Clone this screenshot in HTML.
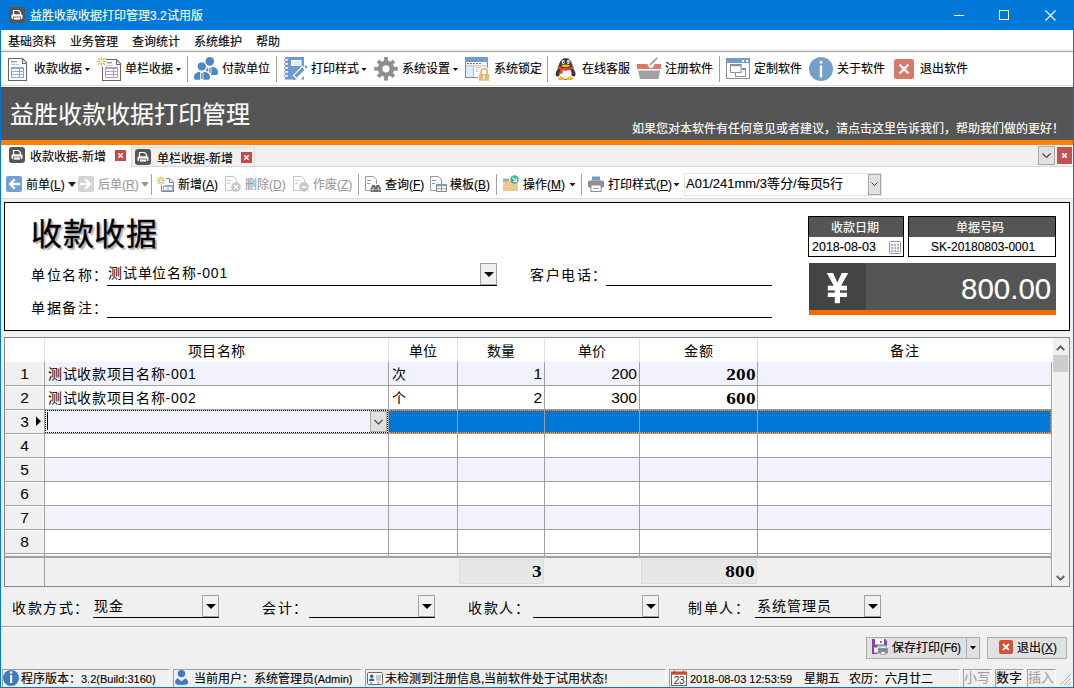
<!DOCTYPE html>
<html lang="zh-CN">
<head>
<meta charset="utf-8">
<style>
*{box-sizing:border-box;margin:0;padding:0}
html,body{width:1074px;height:688px;overflow:hidden;background:#f0f0f0;font-family:"Liberation Sans",sans-serif;font-size:12px;color:#000}
.a{position:absolute}
.t{position:absolute;white-space:nowrap;line-height:1;-webkit-text-stroke:0.12px currentColor}
#title{left:0;top:0;width:1074px;height:30px;background:#0078d7}
#menu{left:1px;top:30px;width:1072px;height:19px;background:#fff}
#tb{left:1px;top:52px;width:1072px;height:33px;background:#fff}
#banner{left:1px;top:87px;width:1072px;height:53px;background:#555}
.sep{position:absolute;width:1px;background:#a0a0a0}
.dd{position:absolute;width:0;height:0;border-left:3px solid transparent;border-right:3px solid transparent;border-top:3px solid #000}
.cb{position:absolute;width:17px;height:22px;background:#f0f0f0;border:1px solid #a0a0a0}
.cb:after{content:"";position:absolute;left:3px;top:8px;border-left:5px solid transparent;border-right:5px solid transparent;border-top:5px solid #000}
.ul{position:absolute;height:1px;background:#000}
.gl{position:absolute;background:#a0a0a0}
.num{font-family:"Liberation Sans",sans-serif;font-size:15.5px;-webkit-text-stroke:0}
.bn{font-family:"Liberation Serif",serif;font-weight:bold;font-size:17px;letter-spacing:0.3px;-webkit-text-stroke:0;transform:scaleX(1.13);transform-origin:right center}
</style>
</head>
<body>
<!-- window borders -->
<div class="a" style="left:0;top:0;width:1px;height:688px;background:#0078d7"></div>
<div class="a" style="left:1073px;top:0;width:1px;height:688px;background:#0078d7"></div>
<div class="a" style="left:0;top:687px;width:1074px;height:1px;background:#0078d7"></div>

<!-- title bar -->
<div id="title" class="a">
  <div class="t" style="left:30px;top:10px;font-size:12px;color:#fff">益胜收款收据打印管理3.2试用版</div>
  <div class="a" style="left:954px;top:15px;width:10px;height:1px;background:#fff"></div>
  <div class="a" style="left:999px;top:10px;width:10px;height:10px;border:1px solid #fff"></div>
  <svg class="a" style="left:1045px;top:10px" width="11" height="11"><path d="M0.5 0.5L10.5 10.5M10.5 0.5L0.5 10.5" stroke="#fff" stroke-width="1.1"/></svg>
</div>

<!-- menu -->
<div id="menu" class="a">
  <div class="t" style="left:7px;top:6px">基础资料</div>
  <div class="t" style="left:69px;top:6px">业务管理</div>
  <div class="t" style="left:131px;top:6px">查询统计</div>
  <div class="t" style="left:193px;top:6px">系统维护</div>
  <div class="t" style="left:255px;top:6px">帮助</div>
</div>
<div class="a" style="left:1px;top:49px;width:1072px;height:2px;background:#f0f0f0"></div>
<div class="a" style="left:1px;top:51px;width:1072px;height:1px;background:#a0a0a0"></div>

<!-- toolbar -->
<div id="tb" class="a"></div>
<svg class="a" style="left:0;top:0" width="1074" height="100">
 <!-- title icon printer -->
 <g transform="translate(9,7)">
  <rect x="0" y="0" width="16" height="16" rx="3" fill="#555"/>
  <path d="M4.5 3.5h5l2 2v2.5h-7z" fill="none" stroke="#fff" stroke-width="1.2"/>
  <rect x="2.5" y="7.5" width="11" height="4.5" rx="1" fill="#fff"/>
  <rect x="4.5" y="10" width="7" height="3" fill="#fff" stroke="#555" stroke-width="0.8"/>
 </g>
 <!-- icon1 doc blue table -->
 <g>
  <path d="M8.5 58.5H22.5L26.5 62.5V80.5H8.5Z" fill="#fff" stroke="#666" stroke-width="1.1"/>
  <path d="M22.5 58.5V63.5H26.5" fill="none" stroke="#666" stroke-width="1.1"/>
  <rect x="11" y="61" width="6" height="1.4" fill="#999"/>
  <rect x="11" y="64" width="8" height="0.8" fill="#bbb"/>
  <rect x="11" y="67" width="13" height="11" fill="#87a9d9"/>
  <rect x="12" y="69" width="7" height="2" fill="#fff"/><rect x="20" y="69" width="3" height="2" fill="#fff"/>
  <rect x="12" y="72" width="7" height="2" fill="#fff"/><rect x="20" y="72" width="3" height="2" fill="#fff"/>
  <rect x="12" y="75" width="7" height="2" fill="#fff"/><rect x="20" y="75" width="3" height="2" fill="#fff"/>
 </g>
 <!-- icon2 doc purple table + sun -->
 <g>
  <path d="M102.5 59.5H116.5L120.5 63.5V80.5H102.5Z" fill="#fff" stroke="#666" stroke-width="1.1"/>
  <path d="M116.5 59.5V64.5H120.5" fill="none" stroke="#666" stroke-width="1.1"/>
  <rect x="107" y="62" width="5" height="1.4" fill="#999"/>
  <rect x="106" y="65" width="7" height="0.8" fill="#bbb"/>
  <rect x="105" y="67" width="13" height="11" fill="#b99bcb"/>
  <rect x="106" y="69" width="7" height="2" fill="#fff"/><rect x="114" y="69" width="3" height="2" fill="#fff"/>
  <rect x="106" y="72" width="7" height="2" fill="#fff"/><rect x="114" y="72" width="3" height="2" fill="#fff"/>
  <rect x="106" y="75" width="7" height="2" fill="#fff"/><rect x="114" y="75" width="3" height="2" fill="#fff"/>
  <rect x="96" y="56" width="10" height="11" fill="#fff"/>
  <path d="M101.5 56.5V66.5M96.5 61.5H106.5M98 58L105 65M105 58L98 65" stroke="#eab466" stroke-width="1.2"/>
  <circle cx="101.5" cy="61.5" r="1.5" fill="#fff"/>
 </g>
 <rect x="187" y="56" width="1" height="26" fill="#a0a0a0"/>
 <!-- icon3 people -->
 <g fill="#4a88cc">
  <circle cx="209.8" cy="61.4" r="4.3"/>
  <path d="M206 75V70Q206 67 212 67Q218 67 218 72.5V73Q218 75 216 75Z"/>
  <rect x="208.2" y="67" width="3.2" height="7" fill="#fff"/>
  <rect x="209" y="68" width="1.8" height="5" fill="#999"/>
  <circle cx="201.8" cy="66.4" r="5.3" fill="#fff"/>
  <path d="M192.8 81V76Q192.8 70.5 202 70.5Q211.2 70.5 211.2 76V81Z" fill="#fff"/>
  <circle cx="201.8" cy="66.4" r="4.2"/>
  <path d="M194 79.8V76.5Q194 71.7 202 71.7Q210 71.7 210 76.5V77.8Q210 79.8 208 79.8H196Q194 79.8 194 77.8Z"/>
  <rect x="200.2" y="71.5" width="3.2" height="8.5" fill="#fff"/>
  <rect x="201" y="73" width="1.8" height="6" fill="#999"/>
 </g>
 <rect x="276" y="56" width="1" height="26" fill="#a0a0a0"/>
 <!-- icon4 notebook -->
 <g>
  <path d="M285 57H304V69L293.5 79.5H285Z" fill="#6b9bd1"/>
  <path d="M300.5 79.5H304V76Z" fill="#6b9bd1"/>
  <rect x="291" y="60" width="10.5" height="6" fill="#fff"/>
  <rect x="292" y="61" width="8.5" height="4" fill="#e4edf8"/>
  <g fill="#f0ece6"><rect x="284" y="59" width="4" height="1.8"/><rect x="284" y="63" width="4" height="1.8"/><rect x="284" y="67" width="4" height="1.8"/><rect x="284" y="71" width="4" height="1.8"/><rect x="284" y="75" width="4" height="1.8"/></g>
  <g fill="#999"><rect x="284" y="59" width="1" height="1.8"/><rect x="284" y="63" width="1" height="1.8"/><rect x="284" y="67" width="1" height="1.8"/><rect x="284" y="71" width="1" height="1.8"/><rect x="284" y="75" width="1" height="1.8"/></g>
  <path d="M294.5 77.5L304.5 67.5" stroke="#fff" stroke-width="5.5"/>
  <path d="M295.5 76.5L303.5 68.5" stroke="#6b9bd1" stroke-width="3.2"/>
  <path d="M305 66L307 68" stroke="#6b9bd1" stroke-width="1.8"/>
  <path d="M292.8 80.2L293.8 76.6L296.4 79.2Z" fill="#6b9bd1"/>
 </g>
 <!-- icon5 gear -->
 <g transform="translate(386,68.8)" fill="#8f8f8f">
  <circle r="8.2"/>
  <rect x="-1.9" y="-11.8" width="3.8" height="23.6"/>
  <rect x="-11.8" y="-1.9" width="23.6" height="3.8"/>
  <rect x="-1.9" y="-11.2" width="3.8" height="22.4" transform="rotate(45)"/>
  <rect x="-1.9" y="-11.2" width="3.8" height="22.4" transform="rotate(-45)"/>
  <circle r="3.6" fill="#fff"/>
 </g>
 <!-- icon6 lock window -->
 <g>
  <rect x="465.5" y="57.5" width="22" height="20" fill="#fff" stroke="#8a8a8a"/>
  <rect x="465" y="57" width="23" height="5" fill="#6d9ecf"/>
  <rect x="466" y="66" width="7" height="11" fill="#dcefff"/>
  <rect x="466" y="65.5" width="21" height="0.8" fill="#aaa"/>
  <rect x="473" y="66" width="0.8" height="11" fill="#aaa"/>
  <g fill="#777"><rect x="467" y="63" width="2" height="1.2"/><rect x="470" y="63" width="2" height="1.2"/><rect x="473" y="63" width="2" height="1.2"/><rect x="476" y="63" width="2" height="1.2"/><rect x="479" y="63" width="2" height="1.2"/></g>
  <g fill="#bbb"><rect x="476" y="67" width="5" height="0.8"/><rect x="476" y="69" width="3" height="0.8"/><rect x="476" y="71" width="3" height="0.8"/></g>
  <rect x="478" y="68" width="12" height="14" fill="#fff"/>
  <path d="M481.2 74V71.2Q481.2 68.6 484.2 68.6Q487.2 68.6 487.2 71.2V74" fill="none" stroke="#e8b870" stroke-width="1.8"/>
  <rect x="479" y="74" width="10" height="6.7" fill="#e8b870"/>
  <rect x="483" y="75.3" width="1.6" height="4" fill="#fff"/>
 </g>
 <rect x="547" y="56" width="1" height="26" fill="#a0a0a0"/>
 <!-- icon7 penguin -->
 <g>
  <ellipse cx="558.2" cy="72.5" rx="2.2" ry="4.2" fill="#3b3b3b" transform="rotate(18 558.2 72.5)"/>
  <ellipse cx="573" cy="72.5" rx="2.2" ry="4.2" fill="#3b3b3b" transform="rotate(-18 573 72.5)"/>
  <ellipse cx="565.6" cy="69" rx="7.4" ry="11" fill="#3b3b3b"/>
  <ellipse cx="565.6" cy="73.5" rx="6" ry="5.8" fill="#f2f4f8"/>
  <ellipse cx="563.2" cy="62" rx="1.5" ry="2" fill="#fff"/><ellipse cx="568.2" cy="62" rx="1.5" ry="2" fill="#fff"/>
  <circle cx="563.5" cy="62.3" r="0.7" fill="#333"/><circle cx="567.9" cy="62.3" r="0.7" fill="#333"/>
  <ellipse cx="565.6" cy="65.8" rx="4.2" ry="1.3" fill="#f2b822"/>
  <path d="M557.8 67Q565.6 71.8 573.4 67" fill="none" stroke="#e2432f" stroke-width="2.6"/>
  <rect x="560" y="69" width="2.6" height="4.6" fill="#e2432f"/>
  <ellipse cx="561.3" cy="78.6" rx="3.4" ry="1.5" fill="#f5b81c"/><ellipse cx="569.9" cy="78.6" rx="3.4" ry="1.5" fill="#f5b81c"/>
 </g>
 <!-- icon8 basket -->
 <g>
  <path d="M637 64H647.5Q648.5 68 651 68Q653.5 68 654.5 64H661V69H637Z" fill="#dc7868"/>
  <path d="M638 70.5H660L658.5 79H640Z" fill="#a0a0a0"/>
  <path d="M649.8 65L657.2 58" stroke="#909090" stroke-width="1.6"/>
 </g>
 <rect x="719" y="56" width="1" height="26" fill="#a0a0a0"/>
 <!-- icon9 window -->
 <g>
  <rect x="726.5" y="58.5" width="23" height="20" fill="#fff" stroke="#909090"/>
  <rect x="726" y="58" width="24" height="5" fill="#6d9ecf"/>
  <rect x="742" y="60" width="2" height="2" fill="#fff"/><rect x="746" y="60" width="2" height="2" fill="#fff"/>
  <path d="M735.5 72V76.5H745.5V68.5H741.5" fill="none" stroke="#909090"/>
  <rect x="742" y="68" width="4" height="2" fill="#909090"/>
  <rect x="730.5" y="64.5" width="10.5" height="8" fill="#fff" stroke="#909090"/>
  <rect x="730" y="64" width="11.5" height="2.2" fill="#909090"/>
 </g>
 <!-- icon10 info -->
 <g>
  <circle cx="821" cy="69" r="12" fill="#739fcb"/>
  <circle cx="821" cy="62.2" r="1.5" fill="#fff"/>
  <rect x="819.8" y="65.5" width="2.4" height="12" fill="#fff"/>
 </g>
 <!-- icon11 exit -->
 <g>
  <rect x="894" y="59" width="20" height="20" rx="2.5" fill="#d9776a"/>
  <path d="M899.5 64.5L908.5 73.5M908.5 64.5L899.5 73.5" stroke="#fff" stroke-width="2.4"/>
 </g>
 <!-- dropdown arrows -->
 <g fill="#000">
  <path d="M85 68H90L87.5 71Z"/><path d="M176 68H181L178.5 71Z"/><path d="M361.5 68H366.5L364 71Z"/><path d="M453 68H458L455.5 71Z"/>
 </g>
</svg>
<div class="t" style="left:34px;top:63px">收款收据</div>
<div class="t" style="left:125px;top:63px">单栏收据</div>
<div class="t" style="left:222px;top:63px">付款单位</div>
<div class="t" style="left:311px;top:63px">打印样式</div>
<div class="t" style="left:402px;top:63px">系统设置</div>
<div class="t" style="left:494px;top:63px">系统锁定</div>
<div class="t" style="left:582px;top:63px">在线客服</div>
<div class="t" style="left:665px;top:63px">注册软件</div>
<div class="t" style="left:754px;top:63px">定制软件</div>
<div class="t" style="left:837px;top:63px">关于软件</div>
<div class="t" style="left:920px;top:63px">退出软件</div>
<div class="a" style="left:1px;top:85px;width:1072px;height:1px;background:#d8d8d8"></div>
<div class="a" style="left:1px;top:86px;width:1072px;height:1px;background:#fff"></div>

<!-- banner -->
<div id="banner" class="a">
  <div class="a" style="left:0;top:0;width:1072px;height:1px;background:#484848"></div>
  <div class="t" style="left:9px;top:16px;font-size:24px;color:#fff">益胜收款收据打印管理</div>
  <div class="t" style="left:631px;top:36px;font-size:12px;color:#fff">如果您对本软件有任何意见或者建议，请点击这里告诉我们，帮助我们做的更好！</div>
</div>
<div class="a" style="left:1px;top:140px;width:1072px;height:5px;background:#ff8000"></div>

<!-- tab strip -->
<div class="a" style="left:1px;top:145px;width:1072px;height:22px;background:#f0f0f0"></div>
<div class="a" style="left:1px;top:166px;width:1072px;height:1px;background:#d9d9d9"></div>
<div class="a" style="left:1px;top:145px;width:130px;height:23px;background:#fff"></div>
<div class="a" style="left:131px;top:147px;width:124px;height:20px;background:#f0f0f0;border:1px solid #d9d9d9;border-bottom:none"></div>

<!-- secondary toolbar -->
<div class="a" style="left:1px;top:167px;width:1072px;height:31px;background:#fff"></div>
<div class="a" style="left:131px;top:166px;width:942px;height:1px;background:#d9d9d9"></div>
<div class="a" style="left:1px;top:198px;width:1072px;height:1px;background:#d9d9d9"></div>
<svg class="a" style="left:0;top:140px" width="1074" height="60">
 <g transform="translate(0,-140)">
 <!-- tab printer icons -->
 <g transform="translate(9,147)">
  <rect x="0" y="0" width="16" height="16" rx="3" fill="#555"/>
  <path d="M4.5 3.5h5l2 2v2.5h-7z" fill="none" stroke="#fff" stroke-width="1.2"/>
  <rect x="2.5" y="7.5" width="11" height="4.5" rx="1" fill="#fff"/>
  <rect x="4.5" y="10" width="7" height="3" fill="#fff" stroke="#555" stroke-width="0.8"/>
 </g>
 <g transform="translate(135,149)">
  <rect x="0" y="0" width="16" height="16" rx="3" fill="#555"/>
  <path d="M4.5 3.5h5l2 2v2.5h-7z" fill="none" stroke="#fff" stroke-width="1.2"/>
  <rect x="2.5" y="7.5" width="11" height="4.5" rx="1" fill="#fff"/>
  <rect x="4.5" y="10" width="7" height="3" fill="#fff" stroke="#555" stroke-width="0.8"/>
 </g>
 <rect x="115" y="150" width="11" height="11" fill="#c9474a"/>
 <path d="M118.3 153.3L122.7 157.7M122.7 153.3L118.3 157.7" stroke="#fff" stroke-width="1.6"/>
 <rect x="241" y="152" width="11" height="11" fill="#c9474a"/>
 <path d="M244.3 155.3L248.7 159.7M248.7 155.3L244.3 159.7" stroke="#fff" stroke-width="1.6"/>
 <!-- right tab buttons -->
 <rect x="1038.5" y="146.5" width="16" height="18" fill="#e1e1e1" stroke="#a8a8a8"/>
 <path d="M1042.5 153.5L1046.5 157.5L1050.5 153.5" fill="none" stroke="#444" stroke-width="1.1"/>
 <rect x="1057" y="147" width="15" height="17" fill="#c65050"/>
 <path d="M1062.3 153.3L1066.7 157.7M1066.7 153.3L1062.3 157.7" stroke="#fff" stroke-width="1.8"/>
 <!-- prev -->
 <rect x="6" y="176" width="16" height="16" rx="2" fill="#729fd4"/>
 <path d="M20 184H10.5M14.8 179.2L10 184L14.8 188.8" fill="none" stroke="#fff" stroke-width="2.3"/>
 <path d="M68 182H76L72 187Z" fill="#222"/>
 <!-- next -->
 <rect x="78" y="176" width="16" height="16" rx="2" fill="#d4d4d4"/>
 <path d="M80 184H89.5M85.2 179.2L90 184L85.2 188.8" fill="none" stroke="#fff" stroke-width="2.3"/>
 <path d="M141 182H149L145 187Z" fill="#999"/>
 <rect x="151" y="174" width="1" height="21" fill="#a0a0a0"/>
 <!-- new -->
 <path d="M161.5 178.5H170L173.5 182V191.5H161.5Z" fill="#fff" stroke="#888"/>
 <path d="M169.5 178.5V182.5H173.5" fill="none" stroke="#888"/>
 <rect x="163.5" y="185.5" width="9" height="5" fill="#fff" stroke="#8aa9d6"/>
 <rect x="163.5" y="185.5" width="9" height="1.5" fill="#8aa9d6"/>
 <rect x="167.5" y="187" width="1" height="3.5" fill="#8aa9d6"/>
 <rect x="156" y="176" width="10" height="9.5" fill="#fff"/>
 <path d="M161 176.2V185.2M156.5 180.7H165.5M157.8 177.5L164.2 183.9M164.2 177.5L157.8 183.9" stroke="#eab466" stroke-width="1.1"/>
 <circle cx="161" cy="180.7" r="1.3" fill="#fff"/>
 <!-- delete grey -->
 <path d="M225.5 176.5H233.5L236.5 179.5V190.5H225.5Z" fill="#fff" stroke="#c4c4c4"/>
 <rect x="227" y="180" width="4" height="1" fill="#ccc"/><rect x="227" y="183" width="3" height="1" fill="#ccc"/>
 <circle cx="236" cy="187" r="4.8" fill="#c8c8c8"/>
 <path d="M234 185L238 189M238 185L234 189" stroke="#fff" stroke-width="1.2"/>
 <!-- void grey -->
 <path d="M293.5 176.5H301.5L304.5 179.5V190.5H293.5Z" fill="#fff" stroke="#c4c4c4"/>
 <rect x="295" y="180" width="4" height="1" fill="#ccc"/><rect x="295" y="183" width="3" height="1" fill="#ccc"/>
 <circle cx="304" cy="187" r="4.8" fill="#c8c8c8"/>
 <rect x="301.5" y="186.3" width="5" height="1.6" fill="#fff"/>
 <rect x="358" y="174" width="1" height="21" fill="#a0a0a0"/>
 <!-- query -->
 <path d="M365.5 176.5H373.5L376.5 179.5V190.5H365.5Z" fill="#fff" stroke="#999"/>
 <rect x="367" y="180" width="4" height="1" fill="#999"/><rect x="367" y="183" width="3" height="1" fill="#6d9ecf"/>
 <rect x="370" y="184" width="11" height="8" fill="#fff"/>
 <path d="M370.5 192V188.5L372.3 185H375L376.2 188.5V192ZM375.2 192V188.5L376.5 185H379.2L381 188.5V192Z" fill="#6a6a6a"/><path d="M373 187V191.5M378.5 187V191.5M370.5 189.3H381" stroke="#e8e8e8" stroke-width="0.6"/>
 <!-- template -->
 <path d="M430.5 176.5H438.5L441.5 179.5V190.5H430.5Z" fill="#fff" stroke="#999"/>
 <rect x="432" y="180" width="4" height="1" fill="#999"/><rect x="432" y="183" width="3" height="1" fill="#6d9ecf"/>
 <rect x="436.5" y="184.5" width="10" height="7" fill="#fff" stroke="#888"/>
 <rect x="436" y="184" width="11" height="2.2" fill="#6d9ecf"/>
 <path d="M441.5 186V191.5M436.5 188.8H446.5" stroke="#888" stroke-width="0.8"/>
 <rect x="496" y="174" width="1" height="21" fill="#a0a0a0"/>
 <!-- operate folder -->
 <rect x="503" y="181" width="15" height="10" fill="#f0c98a"/>
 <rect x="503" y="178.5" width="6" height="3" fill="#aaa"/>
 <circle cx="514.5" cy="179.5" r="4.3" fill="#3db79b"/>
 <path d="M512.5 177.5L516.2 181.2M516.5 178.5V181.5H513.5" fill="none" stroke="#fff" stroke-width="1.1"/>
 <path d="M569.5 183H575.5L572.5 186.5Z" fill="#222"/>
 <rect x="581" y="174" width="1" height="21" fill="#a0a0a0"/>
 <!-- printer -->
 <rect x="592" y="176.5" width="8" height="4" fill="#6d9ecf"/>
 <rect x="588" y="180.5" width="16" height="7" rx="1.5" fill="#8e8e8e"/>
 <rect x="591" y="185" width="10" height="6.5" fill="#fff" stroke="#8e8e8e"/>
 <rect x="593" y="188" width="6" height="0.8" fill="#6d9ecf"/>
 <path d="M673.5 183H679.5L676.5 186.5Z" fill="#222"/>
 <!-- combo -->
 <rect x="684.5" y="173.5" width="197" height="22" fill="#fff" stroke="#e3e3e3"/>
 <rect x="868.5" y="174.5" width="12" height="20" fill="#e1e1e1" stroke="#a8a8a8"/>
 <path d="M871.5 182.5L874.5 185.5L877.5 182.5" fill="none" stroke="#444" stroke-width="1"/>
 </g>
</svg>
<div class="t" style="left:30px;top:151px">收款收据-新增</div>
<div class="t" style="left:157px;top:153px">单栏收据-新增</div>
<div class="t" style="left:26px;top:179px">前单(<u>L</u>)</div>
<div class="t" style="left:98px;top:179px;color:#999">后单(<u>R</u>)</div>
<div class="t" style="left:178px;top:179px">新增(<u>A</u>)</div>
<div class="t" style="left:245px;top:179px;color:#999">删除(<u>D</u>)</div>
<div class="t" style="left:313px;top:179px;color:#999">作废(<u>Z</u>)</div>
<div class="t" style="left:385px;top:179px">查询(<u>F</u>)</div>
<div class="t" style="left:450px;top:179px">模板(<u>B</u>)</div>
<div class="t" style="left:523px;top:179px">操作(<u>M</u>)</div>
<div class="t" style="left:608px;top:179px">打印样式(<u>P</u>)</div>
<div class="t" style="left:686px;top:177px;font-size:13px">A01/241mm/3等分/每页5行</div>

<!-- form panel -->
<div class="a" style="left:4px;top:202px;width:1066px;height:129px;background:#fff;border:1px solid #000"></div>
<div class="t" style="left:31px;top:219px;font-size:31px;font-weight:normal;-webkit-text-stroke:0.35px #000;text-shadow:2px 2px 1.5px rgba(0,0,0,0.35);letter-spacing:0.5px">收款收据</div>
<div class="t" style="left:31px;top:268px;font-size:14px;letter-spacing:1.5px;-webkit-text-stroke:0">单位名称：</div>
<div class="t" style="left:108px;top:266px;font-size:14px;letter-spacing:0.8px;-webkit-text-stroke:0">测试单位名称-001</div>
<div class="ul" style="left:107px;top:285px;width:390px"></div>
<div class="cb" style="left:480px;top:263px;height:22px"></div>
<div class="t" style="left:530px;top:268px;font-size:14px;letter-spacing:1.5px;-webkit-text-stroke:0">客户电话：</div>
<div class="ul" style="left:606px;top:285px;width:166px"></div>
<div class="t" style="left:31px;top:301px;font-size:14px;letter-spacing:1.5px;-webkit-text-stroke:0">单据备注：</div>
<div class="ul" style="left:107px;top:317px;width:665px"></div>
<!-- date box -->
<div class="a" style="left:808px;top:216px;width:96px;height:41px;border:1px solid #000;background:#fff"></div>
<div class="a" style="left:809px;top:217px;width:94px;height:20px;background:#555"></div>
<div class="t" style="left:831px;top:222px;color:#fff">收款日期</div>
<div class="t" style="left:812px;top:241px;font-size:12.5px">2018-08-03</div>
<svg class="a" style="left:888px;top:240px" width="14" height="15">
 <rect x="1.5" y="1.5" width="11" height="12" rx="1" fill="#f4f6f9" stroke="#999"/>
 <g fill="#a8b4c8"><rect x="3" y="4" width="2" height="2"/><rect x="6" y="4" width="2" height="2"/><rect x="9" y="4" width="2" height="2"/><rect x="3" y="7" width="2" height="2"/><rect x="6" y="7" width="2" height="2"/><rect x="9" y="7" width="2" height="2"/><rect x="3" y="10" width="2" height="2"/><rect x="6" y="10" width="2" height="2"/><rect x="9" y="10" width="2" height="2"/></g>
</svg>
<div class="a" style="left:908px;top:216px;width:148px;height:41px;border:1px solid #000;background:#fff"></div>
<div class="a" style="left:909px;top:217px;width:146px;height:20px;background:#555"></div>
<div class="t" style="left:956px;top:222px;color:#fff">单据号码</div>
<div class="t" style="left:931px;top:241px;font-size:12px">SK-20180803-0001</div>
<!-- money box -->
<div class="a" style="left:809px;top:263px;width:247px;height:52px;background:#555"></div>
<div class="a" style="left:809px;top:263px;width:57px;height:47px;background:#444"></div>
<div class="a" style="left:809px;top:310px;width:247px;height:5px;background:#ff6600"></div>
<svg class="a" style="left:0;top:0" width="1074" height="320"><g fill="#fff"><path d="M826.7 273H833.1L837.3 282.5L841.8 273H848.2L840.6 286.5H834.2Z"/><rect x="827.8" y="285.7" width="19.2" height="4.7"/><rect x="827.8" y="292.7" width="19.2" height="4.3"/><rect x="834.8" y="285" width="5.2" height="18.2"/></g></svg>
<div class="t" style="left:961px;top:274px;font-size:29.5px;color:#fff">800.00</div>

<!-- grid -->
<div class="a" style="left:4px;top:337px;width:1066px;height:250px;background:#fff;border:1px solid #828790"></div>
<div class="a" style="left:5px;top:362px;width:39px;height:224px;background:#f0f0f0"></div>
<div class="a" style="left:5px;top:386px;width:38px;height:1px;background:#fff"></div>
<div class="a" style="left:5px;top:410px;width:38px;height:1px;background:#fff"></div>
<div class="a" style="left:5px;top:434px;width:38px;height:1px;background:#fff"></div>
<div class="a" style="left:5px;top:458px;width:38px;height:1px;background:#fff"></div>
<div class="a" style="left:5px;top:482px;width:38px;height:1px;background:#fff"></div>
<div class="a" style="left:5px;top:506px;width:38px;height:1px;background:#fff"></div>
<div class="a" style="left:5px;top:530px;width:38px;height:1px;background:#fff"></div>
<div class="a" style="left:5px;top:554px;width:38px;height:1px;background:#fff"></div>
<div class="a" style="left:43px;top:362px;width:1px;height:194px;background:#f8f8f8"></div>
<div class="a" style="left:45px;top:362px;width:1006px;height:23px;background:#f2f2fd"></div>
<div class="a" style="left:45px;top:458px;width:1006px;height:23px;background:#f2f2fd"></div>
<div class="a" style="left:45px;top:506px;width:1006px;height:23px;background:#f2f2fd"></div>
<div class="a" style="left:45px;top:554px;width:1006px;height:2px;background:#f2f2fd"></div>
<div class="a" style="left:45px;top:410px;width:343px;height:23px;background:#f2f2fd"></div>
<div class="a" style="left:389px;top:410px;width:662px;height:23px;background:#0078d7"></div>
<div class="a" style="left:5px;top:558px;width:1047px;height:28px;background:#f0f0f0"></div>
<div class="gl" style="left:44px;top:338px;width:1px;height:24px;background:#e3e3e3"></div>
<div class="gl" style="left:388px;top:338px;width:1px;height:24px;background:#e3e3e3"></div>
<div class="gl" style="left:457px;top:338px;width:1px;height:24px;background:#e3e3e3"></div>
<div class="gl" style="left:544px;top:338px;width:1px;height:24px;background:#e3e3e3"></div>
<div class="gl" style="left:639px;top:338px;width:1px;height:24px;background:#e3e3e3"></div>
<div class="gl" style="left:757px;top:338px;width:1px;height:24px;background:#e3e3e3"></div>
<div class="gl" style="left:5px;top:385px;width:1047px;height:1px"></div>
<div class="gl" style="left:5px;top:409px;width:1047px;height:1px"></div>
<div class="gl" style="left:5px;top:433px;width:1047px;height:1px"></div>
<div class="gl" style="left:5px;top:457px;width:1047px;height:1px"></div>
<div class="gl" style="left:5px;top:481px;width:1047px;height:1px"></div>
<div class="gl" style="left:5px;top:505px;width:1047px;height:1px"></div>
<div class="gl" style="left:5px;top:529px;width:1047px;height:1px"></div>
<div class="gl" style="left:5px;top:553px;width:1047px;height:1px"></div>
<div class="gl" style="left:5px;top:556px;width:1047px;height:2px"></div>
<div class="gl" style="left:44px;top:362px;width:1px;height:194px"></div>
<div class="gl" style="left:388px;top:362px;width:1px;height:194px"></div>
<div class="gl" style="left:457px;top:362px;width:1px;height:194px"></div>
<div class="gl" style="left:544px;top:362px;width:1px;height:194px"></div>
<div class="gl" style="left:639px;top:362px;width:1px;height:194px"></div>
<div class="gl" style="left:757px;top:362px;width:1px;height:194px"></div>
<div class="gl" style="left:1051px;top:362px;width:1px;height:194px"></div>
<div class="gl" style="left:44px;top:558px;width:1px;height:28px"></div>
<div class="gl" style="left:1051px;top:558px;width:1px;height:28px"></div>
<div class="a" style="left:459px;top:559px;width:85px;height:25px;background:#e6e8e8;border:1px solid #dcdcdc"></div>
<div class="a" style="left:641px;top:559px;width:116px;height:25px;background:#e6e8e8;border:1px solid #dcdcdc"></div>
<div class="a" style="left:1053px;top:338px;width:16px;height:248px;background:#f0f0f0"></div>
<div class="a" style="left:1053px;top:355px;width:15px;height:17px;background:#cdcdcd"></div>
<svg class="a" style="left:1053px;top:338px" width="16" height="248"><path d="M3.8 12L7.5 8.3L11.2 12" fill="none" stroke="#606060" stroke-width="1.8"/><path d="M3.8 238L7.5 241.7L11.2 238" fill="none" stroke="#606060" stroke-width="1.8"/></svg>
<div class="t" style="left:45px;top:344px;width:343px;text-align:center;font-size:14px;letter-spacing:0.5px;-webkit-text-stroke:0">项目名称</div>
<div class="t" style="left:389px;top:344px;width:68px;text-align:center;font-size:14px;letter-spacing:0.5px;-webkit-text-stroke:0">单位</div>
<div class="t" style="left:458px;top:344px;width:86px;text-align:center;font-size:14px;letter-spacing:0.5px;-webkit-text-stroke:0">数量</div>
<div class="t" style="left:545px;top:344px;width:94px;text-align:center;font-size:14px;letter-spacing:0.5px;-webkit-text-stroke:0">单价</div>
<div class="t" style="left:640px;top:344px;width:117px;text-align:center;font-size:14px;letter-spacing:0.5px;-webkit-text-stroke:0">金额</div>
<div class="t" style="left:758px;top:344px;width:293px;text-align:center;font-size:14px;letter-spacing:0.5px;-webkit-text-stroke:0">备注</div>
<div class="t num" style="left:5px;top:366px;width:39px;text-align:center">1</div>
<div class="t num" style="left:5px;top:390px;width:39px;text-align:center">2</div>
<div class="t num" style="left:5px;top:414px;width:39px;text-align:center">3</div>
<div class="t num" style="left:5px;top:438px;width:39px;text-align:center">4</div>
<div class="t num" style="left:5px;top:462px;width:39px;text-align:center">5</div>
<div class="t num" style="left:5px;top:486px;width:39px;text-align:center">6</div>
<div class="t num" style="left:5px;top:510px;width:39px;text-align:center">7</div>
<div class="t num" style="left:5px;top:534px;width:39px;text-align:center">8</div>
<svg class="a" style="left:35px;top:416px" width="8" height="11"><path d="M1 0.5L6 5.2L1 10Z" fill="#000"/></svg>
<div class="a" style="left:45px;top:410px;width:343px;height:23px;border:1px dotted #000"></div>
<div class="a" style="left:47px;top:412px;width:1px;height:18px;background:#000"></div>
<div class="a" style="left:370px;top:411px;width:17px;height:21px;background:#e1e1e1;border:1px solid #adadad"></div>
<svg class="a" style="left:370px;top:411px" width="17" height="21"><path d="M4.5 9L8.5 13L12.5 9" fill="none" stroke="#444" stroke-width="1.1"/></svg>
<div class="a" style="left:389px;top:410px;width:662px;height:23px;border-top:1px dotted #e89a50;border-bottom:1px dotted #e89a50;border-right:1px dotted #e89a50"></div>
<div class="t" style="left:48px;top:367px;font-size:14px;letter-spacing:0.7px;-webkit-text-stroke:0">测试收款项目名称-001</div>
<div class="t" style="left:48px;top:391px;font-size:14px;letter-spacing:0.7px;-webkit-text-stroke:0">测试收款项目名称-002</div>
<div class="t" style="left:392px;top:367px;font-size:14px;-webkit-text-stroke:0">次</div>
<div class="t" style="left:392px;top:391px;font-size:14px;-webkit-text-stroke:0">个</div>
<div class="t num" style="left:458px;top:366px;width:84px;text-align:right">1</div>
<div class="t num" style="left:545px;top:366px;width:92px;text-align:right">200</div>
<div class="t bn" style="left:640px;top:366px;width:116px;text-align:right">200</div>
<div class="t num" style="left:458px;top:390px;width:84px;text-align:right">2</div>
<div class="t num" style="left:545px;top:390px;width:92px;text-align:right">300</div>
<div class="t bn" style="left:640px;top:390px;width:116px;text-align:right">600</div>
<div class="t bn" style="left:459px;top:563px;width:83px;text-align:right">3</div>
<div class="t bn" style="left:641px;top:563px;width:114px;text-align:right">800</div>

<!-- bottom -->
<div class="t" style="left:12px;top:601px;font-size:14px;letter-spacing:1.5px;-webkit-text-stroke:0">收款方式：</div>
<div class="ul" style="left:93px;top:617px;width:126px"></div>
<div class="cb" style="left:202px;top:595px;height:22px;width:17px"></div>
<div class="t" style="left:94px;top:599px;font-size:14px;letter-spacing:1px;-webkit-text-stroke:0">现金</div>
<div class="t" style="left:262px;top:601px;font-size:14px;letter-spacing:1.5px;-webkit-text-stroke:0">会计：</div>
<div class="ul" style="left:309px;top:617px;width:126px"></div>
<div class="cb" style="left:418px;top:595px;height:22px;width:17px"></div>
<div class="t" style="left:468px;top:601px;font-size:14px;letter-spacing:1.5px;-webkit-text-stroke:0">收款人：</div>
<div class="ul" style="left:533px;top:617px;width:126px"></div>
<div class="cb" style="left:642px;top:595px;height:22px;width:17px"></div>
<div class="t" style="left:688px;top:601px;font-size:14px;letter-spacing:1.5px;-webkit-text-stroke:0">制单人：</div>
<div class="ul" style="left:755px;top:617px;width:126px"></div>
<div class="cb" style="left:864px;top:595px;height:22px;width:17px"></div>
<div class="t" style="left:757px;top:599px;font-size:14px;letter-spacing:1px;-webkit-text-stroke:0">系统管理员</div>
<div class="a" style="left:1px;top:626px;width:1072px;height:1px;background:#a0a0a0"></div>
<div class="a" style="left:1px;top:627px;width:1072px;height:1px;background:#fff"></div>
<div class="a" style="left:866px;top:637px;width:101px;height:22px;background:#e1e1e1;border:1px solid #adadad"></div>
<div class="a" style="left:966px;top:637px;width:14px;height:22px;background:#e1e1e1;border:1px solid #adadad"></div>
<div class="a" style="left:987px;top:637px;width:80px;height:22px;background:#e1e1e1;border:1px solid #adadad"></div>
<svg class="a" style="left:866px;top:637px" width="202" height="22">
 <g transform="translate(-866,-637)">
 <path d="M872 639H885L887 641V654H872Z" fill="#8a44a8"/>
 <rect x="875" y="639" width="9" height="5.5" fill="#fff"/>
 <rect x="880" y="641" width="1.6" height="2" fill="#555"/>
 <rect x="874" y="647.5" width="4" height="5" fill="#fff"/>
 <rect x="877.5" y="645.5" width="11" height="10" fill="#e1e1e1"/>
 <rect x="878" y="648" width="10" height="5.5" rx="1" fill="#8a8a8a"/>
 <rect x="880" y="646" width="6" height="4" fill="#fff" stroke="#8a8a8a" stroke-width="0.8"/>
 <rect x="880.3" y="648.2" width="5.4" height="1.6" fill="#3b7ac0"/>
 <rect x="881" y="651.5" width="4" height="3" fill="#fff" stroke="#8a8a8a" stroke-width="0.8"/>
 </g>
 <path d="M104 9H110L107 12.5Z" fill="#000"/>
 <rect x="133" y="3" width="14" height="14" rx="2" fill="#d9503a"/>
 <path d="M137 7L143 13M143 7L137 13" stroke="#fff" stroke-width="1.8"/>
</svg>
<div class="t" style="left:892px;top:642px;font-size:12px">保存打印<span style="letter-spacing:-0.3px">(F6)</span></div>
<div class="t" style="left:1017px;top:642px;font-size:12px">退出(<u>X</u>)</div>
<div class="a" style="left:2px;top:669px;width:168px;height:18px;border-top:1px solid #a0a0a0;border-left:1px solid #a0a0a0;border-right:1px solid #fff"></div>
<div class="a" style="left:173px;top:669px;width:189px;height:18px;border-top:1px solid #a0a0a0;border-left:1px solid #a0a0a0;border-right:1px solid #fff"></div>
<div class="a" style="left:365px;top:669px;width:301px;height:18px;border-top:1px solid #a0a0a0;border-left:1px solid #a0a0a0;border-right:1px solid #fff"></div>
<div class="a" style="left:669px;top:669px;width:291px;height:18px;border-top:1px solid #a0a0a0;border-left:1px solid #a0a0a0;border-right:1px solid #fff"></div>
<div class="a" style="left:963px;top:669px;width:29px;height:18px;border-top:1px solid #a0a0a0;border-left:1px solid #a0a0a0;border-right:1px solid #fff"></div>
<div class="a" style="left:995px;top:669px;width:29px;height:18px;border-top:1px solid #a0a0a0;border-left:1px solid #a0a0a0;border-right:1px solid #fff"></div>
<div class="a" style="left:1027px;top:669px;width:29px;height:18px;border-top:1px solid #a0a0a0;border-left:1px solid #a0a0a0;border-right:1px solid #fff"></div>
<svg class="a" style="left:0;top:660px" width="1074" height="28">
 <circle cx="11" cy="18" r="8" fill="#3d7cc4"/>
 <rect x="10" y="15" width="2.2" height="8" fill="#fff"/><circle cx="11.1" cy="12.5" r="1.3" fill="#fff"/>
 <circle cx="181.5" cy="13.6" r="3.7" fill="#3d7cc4"/>
 <path d="M177.5 18.2L181.5 21.2L185.5 18.2Q188.2 19.6 188.2 22.5Q188.2 25 181.5 25Q175 25 175 22.5Q175 19.6 177.5 18.2Z" fill="#3d7cc4"/>
 <rect x="367.5" y="12.5" width="15" height="12" rx="1.2" fill="#fff" stroke="#6a6a6a"/>
 <circle cx="371.7" cy="16.3" r="1.8" fill="#1e5fb4"/><path d="M369 21Q369 18.6 371.7 18.6Q374.4 18.6 374.4 21Z" fill="#1e5fb4"/>
 <rect x="376" y="15.5" width="5" height="0.9" fill="#888"/><rect x="376" y="17.5" width="5" height="0.9" fill="#888"/><rect x="376" y="19.5" width="5" height="0.9" fill="#888"/>
 <rect x="370" y="22.3" width="2.4" height="1" fill="#777"/><rect x="377" y="22.3" width="2.4" height="1" fill="#777"/>
 <rect x="671.5" y="12.5" width="15" height="13" fill="#fff" stroke="#666"/>
 <rect x="671" y="11.5" width="16" height="3.2" fill="#d5452b"/>
 <rect x="674" y="10.5" width="1" height="2" fill="#666"/><rect x="683" y="10.5" width="1" height="2" fill="#666"/>
 <text x="679" y="24.2" font-size="10" text-anchor="middle" font-family="Liberation Sans" fill="#333" letter-spacing="-0.3">23</text>
 <path d="M1071 14L1060 25M1071 18L1064 25M1071 22L1068 25" stroke="#b0b0b0" stroke-width="1"/>
</svg>
<div class="t" style="left:21px;top:673px;font-size:12px">程序版本：<span style="font-size:11px">3.2(Build:3160)</span></div>
<div class="t" style="left:194px;top:673px;font-size:12px">当前用户：系统管理员<span style="font-size:11px">(Admin)</span></div>
<div class="t" style="left:385px;top:673px;font-size:12px">未检测到注册信息,当前软件处于试用状态!</div>
<div class="t" style="left:690px;top:674px;font-size:11px">2018-08-03 12:53:59</div>
<div class="t" style="left:804px;top:673px;font-size:12px">星期五</div>
<div class="t" style="left:849px;top:673px;font-size:12px">农历：六月廿二</div>
<div class="t" style="left:964px;top:671px;font-size:13px;color:#a0a0a0">小写</div>
<div class="t" style="left:996px;top:671px;font-size:13px">数字</div>
<div class="t" style="left:1028px;top:671px;font-size:13px;color:#a0a0a0">插入</div>

</body>
</html>
